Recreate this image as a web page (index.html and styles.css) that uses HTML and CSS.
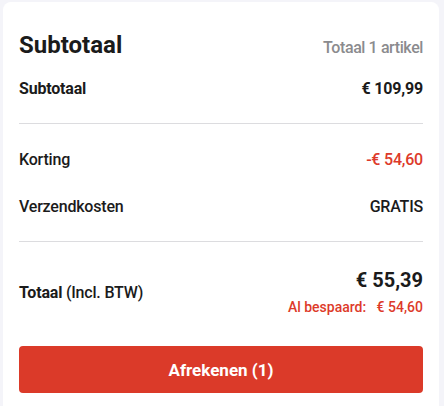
FILE: index.html
```html
<!DOCTYPE html>
<html lang="nl">
<head>
<meta charset="utf-8">
<link rel="stylesheet" href="styles.css">
</head>
<body>
<section class="card">
  <header class="head">
    <h2 class="title">Subtotaal</h2>
    <span class="count">Totaal 1 artikel</span>
  </header>
  <div class="row row-sub">
    <span class="strong">Subtotaal</span>
    <span class="strong">€ 109,99</span>
  </div>
  <hr class="divider">
  <div class="row row-disc">
    <span>Korting</span>
    <span class="red">-€ 54,60</span>
  </div>
  <div class="row row-ship">
    <span>Verzendkosten</span>
    <span>GRATIS</span>
  </div>
  <hr class="divider">
  <div class="total">
    <span class="total-label"><b>Totaal</b> (Incl. BTW)</span>
    <div class="total-values">
      <span class="total-price">€ 55,39</span>
      <span class="saved">Al bespaard:&nbsp;&nbsp; € 54,60</span>
    </div>
  </div>
  <button class="checkout">Afrekenen (1)</button>
</section>
</body>
</html>
```
FILE: styles.css
```css
html, body {
  margin: 0;
  padding: 0;
}
body {
  background: #f4f4f9;
  font-family: Roboto, "Liberation Sans", sans-serif;
  color: #1b1b1b;
  height: 406px;
  overflow: hidden;
}
.card {
  background: #fff;
  margin: 2px 5px 0 3px;
  padding: 28px 16px 20px;
  border-radius: 8px 8px 0 0;
  min-height: 400px;
  box-sizing: border-box;
}
.head {
  display: flex;
  justify-content: space-between;
  align-items: baseline;
  height: 30px;
}
.title {
  margin: 0;
  font-size: 24px;
  font-weight: 700;
  line-height: 30px;
}
.count {
  font-size: 16px;
  font-weight: 500;
  letter-spacing: -0.4px;
  color: #8b8b8e;
}
.row {
  display: flex;
  justify-content: space-between;
  align-items: center;
  font-size: 16px;
  font-weight: 500;
  letter-spacing: -0.2px;
  height: 24px;
}
.row-sub {
  margin-top: 16px;
}
.strong {
  font-weight: 700;
}
.red {
  color: #dd3a2a;
}
.divider {
  border: 0;
  border-top: 1px solid #dcdcdf;
  margin: 23px 0 0;
}
.row-disc {
  margin-top: 23px;
}
.row-ship {
  margin-top: 23px;
}
.total {
  display: flex;
  justify-content: space-between;
  align-items: center;
  margin-top: 26px;
}
.total-label {
  font-size: 16px;
  font-weight: 500;
  letter-spacing: -0.2px;
}
.total-label b {
  font-weight: 700;
}
.total-values {
  display: flex;
  flex-direction: column;
  align-items: flex-end;
  gap: 6px;
}
.total-price {
  font-size: 20px;
  font-weight: 700;
  line-height: 24px;
}
.saved {
  font-size: 14px;
  font-weight: 500;
  color: #dd3a2a;
  line-height: 18px;
}
.checkout {
  display: block;
  width: 100%;
  height: 47px;
  margin-top: 30px;
  border: 0;
  border-radius: 4px;
  background: #db3a29;
  color: #fff;
  font-family: inherit;
  font-size: 17px;
  font-weight: 700;
}
```
